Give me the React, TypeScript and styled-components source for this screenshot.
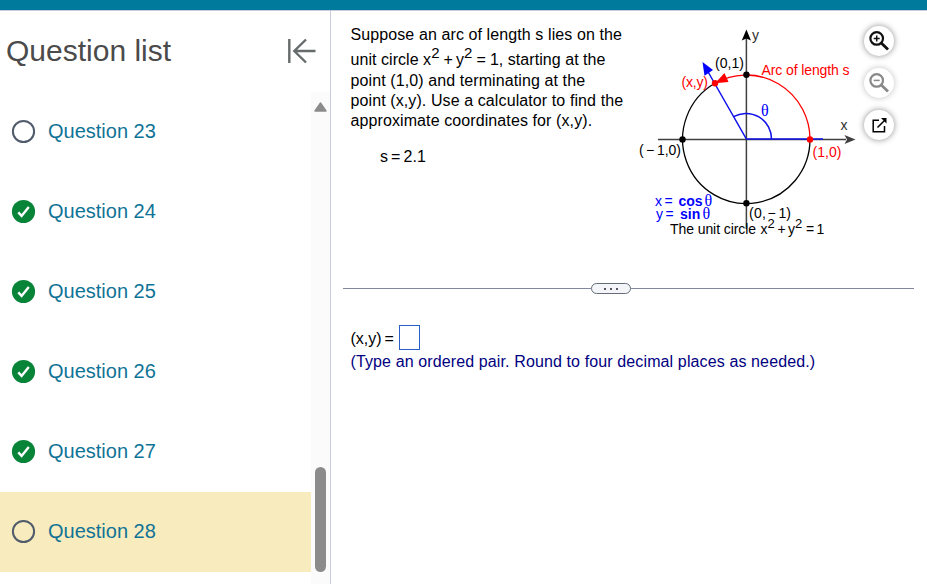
import React from "react";
import styled, { createGlobalStyle } from "styled-components";

const GlobalStyle = createGlobalStyle`
  *, *::before, *::after { box-sizing: border-box; }
  html, body, #root { height: 100%; }
  body {
    margin: 0;
    overflow: hidden;
    background: #fff;
    font-family: "Liberation Sans", Arial, sans-serif;
  }
`;

const Page = styled.div`
  display: flex;
  flex-direction: column;
  height: 100vh;
`;

const TopBar = styled.header`
  flex: 0 0 11px;
  background: #007a9c;
  border-bottom: 1px solid #c7cbdd;
`;

const Columns = styled.div`
  display: flex;
  flex: 1;
  min-height: 0;
`;

const Sidebar = styled.aside`
  display: flex;
  flex-direction: column;
  flex: 0 0 331px;
  border-right: 1px solid #c7cbdd;
`;

const SidebarHeader = styled.div`
  display: flex;
  justify-content: space-between;
  align-items: center;
  flex: 0 0 81px;
  padding: 0 13px 1px 6px;
`;

const Title = styled.h1`
  margin: 0;
  padding-bottom: 1px;
  font-size: 30px;
  font-weight: 400;
  line-height: 40px;
  color: #4b4b4b;
`;

const IconButton = styled.button`
  display: flex;
  padding: 0;
  border: 0;
  background: none;
`;

const ListArea = styled.div`
  display: flex;
  flex: 1;
  min-height: 0;
`;

const List = styled.ul`
  flex: 1;
  margin: 0;
  padding: 0;
  list-style: none;
`;

const Item = styled.li<{ $current?: boolean }>`
  display: flex;
  align-items: center;
  gap: 12px;
  height: 80px;
  padding: 0 0 2px 11px;
  background: ${(p) => (p.$current ? "#f8ebbd" : "transparent")};
`;

const ItemLink = styled.span`
  font-size: 20px;
  line-height: 24px;
  color: #107396;
`;

const Track = styled.div`
  display: flex;
  flex-direction: column;
  align-items: center;
  justify-content: space-between;
  flex: 0 0 19px;
  padding: 10px 0 12px;
  background: #fbfbfb;
`;

const Thumb = styled.div`
  width: 11px;
  height: 105px;
  border-radius: 6px;
  background: #8b8b8b;
`;

const Main = styled.main`
  flex: 1;
  display: flex;
  flex-direction: column;
  padding: 0 13px 0 12px;
`;

const Problem = styled.section`
  display: flex;
  height: 267px;
`;

const Statement = styled.div`
  flex: 0 0 290px;
  padding: 14px 0 0 7.5px;
  font-size: 16px;
  color: #000;
`;

const Line = styled.div<{ $height?: number; $track?: number; $indent?: number }>`
  display: flex;
  align-items: flex-end;
  height: ${(p) => p.$height ?? 20}px;
  margin-left: ${(p) => p.$indent ?? 0}px;
  line-height: 20px;
  letter-spacing: ${(p) => p.$track ?? 0}px;
  white-space: pre;
`;

const Power = styled.span`
  font-size: 15px;
  line-height: 20px;
  padding-bottom: 7px;
`;

const Operator = styled.span<{ $left?: number; $right?: number }>`
  margin: 0 ${(p) => p.$right ?? 3}px 0 ${(p) => p.$left ?? 3}px;
`;

const Figure = styled.figure`
  flex: 0 0 226px;
  margin: 0;
  padding-top: 9px;
  svg { display: block; }
  text { font-family: "Liberation Sans", Arial, sans-serif; font-size: 14px; }
`;

const Tools = styled.div`
  display: flex;
  flex-direction: column;
  gap: 12px;
  padding: 15px 0 0 5px;
`;

const Tool = styled.button<{ $muted?: boolean }>`
  display: flex;
  align-items: center;
  justify-content: center;
  width: 30px;
  height: 30px;
  padding: 0;
  border: 0;
  border-radius: 50%;
  background: #fff;
  box-shadow: 0 0 6px rgba(0, 0, 0, ${(p) => (p.$muted ? 0.25 : 0.45)});
`;

const Divider = styled.div`
  display: flex;
  align-items: center;
  height: 21px;
`;

const Rule = styled.div<{ $width?: number }>`
  flex: ${(p) => (p.$width ? `0 0 ${p.$width}px` : "1")};
  height: 1px;
  background: #81879c;
`;

const Grip = styled.div`
  display: flex;
  align-items: center;
  justify-content: center;
  gap: 4px;
  width: 40px;
  height: 11px;
  border: 1px solid #646c7a;
  border-radius: 6px;
  background: #f3f5f8;
`;

const Dot = styled.i`
  width: 2px;
  height: 2px;
  background: #505865;
`;

const Answer = styled.section`
  padding: 26px 0 0 7.5px;
  font-size: 16px;
`;

const AnswerRow = styled.div`
  display: flex;
  align-items: center;
  height: 25px;
  white-space: pre;
`;

const AnswerBox = styled.input`
  width: 21px;
  height: 25px;
  margin: 0 0 0 2.5px;
  padding: 0;
  border: 1px solid #2860c5;
  border-radius: 0;
  outline: 0;
`;

const Label = styled.span`
  padding-top: 3px;
  line-height: 20px;
`;

const Hint = styled.div`
  line-height: 20px;
  padding-top: 2px;
  color: #000080;
  letter-spacing: 0.12px;
  white-space: nowrap;
`;

const Status = ({ done }: { done: boolean }) => (
  <svg width="25" height="25" viewBox="0 0 25 25">
    {done ? (
      <>
        <circle cx="12.5" cy="12.5" r="11.6" fill="#088439" />
        <path d="M7.3 13.4 10.6 16.9 17.8 8" fill="none" stroke="#fff" strokeWidth="2.4" />
      </>
    ) : (
      <circle cx="12.5" cy="12.5" r="10.6" fill="none" stroke="#505b6b" strokeWidth="2" />
    )}
  </svg>
);

const Magnifier = ({ plus }: { plus?: boolean }) => (
  <svg width="22" height="22" viewBox="0 0 22 22" fill="none" stroke={plus ? "#111" : "#888"}>
    <circle cx="8.7" cy="8.4" r="6.3" strokeWidth="2.2" />
    <path d="M13 12.7 20 19.6" strokeWidth="2.8" />
    <path d={plus ? "M5.7 8.4h6M8.7 5.4v6" : "M5.7 8.4h6"} strokeWidth="1.5" />
  </svg>
);

const UnitCircle = () => (
  <svg width="226" height="225" viewBox="633 20 226 225">
    <g fill="none" strokeWidth="1.3">
      <path d="M658 139.5H846M746.4 38V229" stroke="#404040" strokeWidth="1.5" />
      <path d="M715 83.3A63.7 64.3 0 1 0 810 139" stroke="#000" />
      <path d="M810 139A63.7 64.3 0 0 0 715 83.3" stroke="#f00" />
      <path d="M823 139H746.4L707 70M771.5 139A25.5 25.5 0 0 0 733.5 116.7" stroke="#1010e8" strokeWidth="1.5" />
    </g>
    <path d="M746.4 29.5 751 40.5 746.4 38.5 741.8 40.5Z" fill="#000" />
    <path d="M855.5 139.5 844.5 144 847 139.5 844.5 135Z" fill="#404040" />
    <path d="M702.5 62 713 70 704.5 75.8Z" fill="#00f" />
    <path d="M715 83.3 724.5 73 728.5 82Z" fill="#f00" />
    <circle cx="746.4" cy="74.7" r="3.2" />
    <circle cx="746.4" cy="203.3" r="3.2" />
    <circle cx="682.5" cy="139.5" r="3.2" />
    <circle cx="715" cy="83.3" r="3.2" fill="#f00" />
    <circle cx="810" cy="139.5" r="3.2" fill="#f00" />
    <text x="752" y="40" fill="#303030">y</text>
    <text x="840.5" y="130" fill="#303030">x</text>
    <text x="715" y="68" textLength="29">(0,1)</text>
    <text x="681.5" y="87" fill="#f00" textLength="26.5">(x,y)</text>
    <text x="761.5" y="75" fill="#f00" textLength="88">Arc of length s</text>
    <text x="812.5" y="157" fill="#f00" textLength="29">(1,0)</text>
    <text x="639" y="154.5">(</text>
    <text x="646" y="154.5">−</text>
    <text x="657" y="154.5" textLength="24">1,0)</text>
    <text x="749" y="218" textLength="17">(0,</text>
    <text x="767.5" y="218">−</text>
    <text x="778.5" y="218">1)</text>
    <text x="761" y="116" fill="#00f" style={{ fontFamily: "Liberation Serif", fontSize: 16 }}>θ</text>
    <g fill="#00f">
      <text x="655" y="206">x</text>
      <text x="664.5" y="206">=</text>
      <text x="678.5" y="206" fontWeight="700" textLength="24">cos</text>
      <text x="704.5" y="206" style={{ fontFamily: "Liberation Serif", fontSize: 16 }}>θ</text>
      <text x="656" y="218.5">y</text>
      <text x="665.5" y="218.5">=</text>
      <text x="680" y="218.5" fontWeight="700">sin</text>
      <text x="702.5" y="218.5" style={{ fontFamily: "Liberation Serif", fontSize: 16 }}>θ</text>
    </g>
    <text x="670" y="234" textLength="86">The unit circle</text>
    <text x="760.5" y="234">x</text>
    <text x="767.5" y="228" style={{ fontSize: 13 }}>2</text>
    <text x="777.5" y="234">+</text>
    <text x="788" y="234">y</text>
    <text x="795" y="228" style={{ fontSize: 13 }}>2</text>
    <text x="806" y="234">=</text>
    <text x="816.5" y="234">1</text>
  </svg>
);

const questions = [
  { number: 23, done: false },
  { number: 24, done: true },
  { number: 25, done: true },
  { number: 26, done: true },
  { number: 27, done: true },
  { number: 28, done: false, current: true },
];

export default function App() {
  return (
    <>
      <GlobalStyle />
      <Page>
        <TopBar />
        <Columns>
          <Sidebar>
            <SidebarHeader>
              <Title>Question list</Title>
              <IconButton aria-label="Collapse question list">
                <svg width="30" height="26" viewBox="0 0 30 26" fill="none" stroke="#666b6b" strokeWidth="2.4">
                  <path d="M2.3 1V25M28.5 13H8M19 1.5 7.3 13 19 24.5" />
                </svg>
              </IconButton>
            </SidebarHeader>
            <ListArea>
              <List>
                {questions.map((q) => (
                  <Item key={q.number} $current={q.current}>
                    <Status done={q.done} />
                    <ItemLink>Question {q.number}</ItemLink>
                  </Item>
                ))}
              </List>
              <Track>
                <svg width="13" height="10" viewBox="0 0 13 10">
                  <path d="M6.5 1 12 9H1Z" fill="#8b8b8b" stroke="#8b8b8b" strokeWidth="1.4" strokeLinejoin="round" />
                </svg>
                <Thumb />
              </Track>
            </ListArea>
          </Sidebar>
          <Main>
            <Problem>
              <Statement>
                <Line $track={0.1}>Suppose an arc of length s lies on the</Line>
                <Line $height={25} $track={0.05}>
                  unit circle x<Power>2</Power>
                  <Operator $left={4}>+</Operator>y<Power>2</Power>
                  <Operator $left={4} $right={4}>=</Operator>1, starting at the
                </Line>
                <Line $height={21} $track={0.1}>point (1,0) and terminating at the</Line>
                <Line $track={0.1}>point (x,y). Use a calculator to find the</Line>
                <Line $track={0.1}>approximate coordinates for (x,y).</Line>
                <Line $height={36} $indent={29.5} $track={0.1}>
                  s<Operator>=</Operator>2.1
                </Line>
              </Statement>
              <Figure><UnitCircle /></Figure>
              <Tools>
                <Tool aria-label="Zoom in"><Magnifier plus /></Tool>
                <Tool aria-label="Zoom out" $muted><Magnifier /></Tool>
                <Tool aria-label="Open in new window">
                  <svg width="16" height="16" viewBox="0 0 16 16" fill="none" stroke="#000" strokeWidth="1.5">
                    <path d="M8 3.2H2.2V14.8H13.5V9M6.5 10.5 14 3" />
                    <path d="M10 1H15.5V6.5Z" fill="#000" stroke="none" />
                  </svg>
                </Tool>
              </Tools>
            </Problem>
            <Divider>
              <Rule $width={248} />
              <Grip><Dot /><Dot /><Dot /></Grip>
              <Rule />
            </Divider>
            <Answer>
              <AnswerRow>
                <Label>(x,y)<Operator>=</Operator></Label>
                <AnswerBox aria-label="Ordered pair" />
              </AnswerRow>
              <Hint>(Type an ordered pair. Round to four decimal places as needed.)</Hint>
            </Answer>
          </Main>
        </Columns>
      </Page>
    </>
  );
}
